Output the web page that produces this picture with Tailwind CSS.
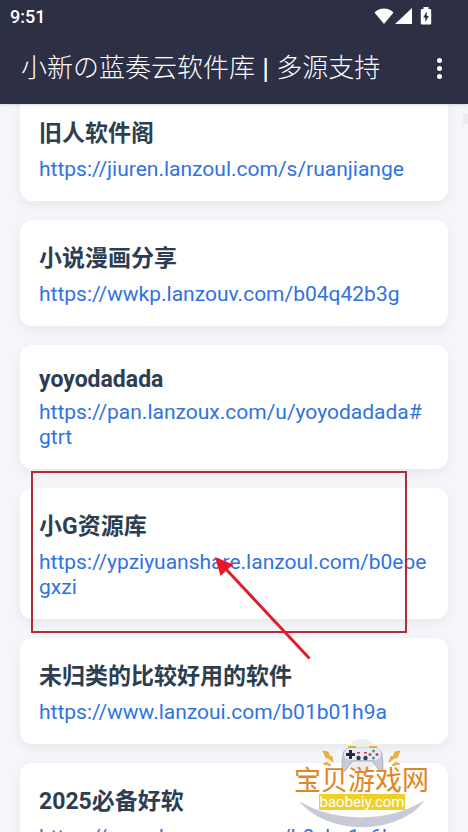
<!DOCTYPE html>
<html lang="zh-CN">
  <head>
    <meta charset="UTF-8" />
    <meta name="viewport" content="width=device-width, initial-scale=1.0" />
    <title>小新の蓝奏云软件库</title>
    <script src="https://cdn.jsdelivr.net/npm/@tailwindcss/browser@4"></script>
  </head>
  <body class="relative h-screen overflow-hidden bg-[#f5f6fa] font-[Roboto,'Noto_Sans_CJK_SC',sans-serif]">
    <header class="relative z-10 bg-[#2d2f45] text-white shadow-sm">
      <div class="flex h-8 items-center justify-between pl-[10px] pr-9">
        <span class="text-[18px] font-medium">9:51</span>
        <div class="flex items-center">
          <svg class="h-4 w-5" viewBox="0 0 20 16" fill="#fff">
            <path d="M.5 4.500C5.500-1 14.500-1 19.500 4.500L10 16z" />
          </svg>
          <svg class="ml-[1px] h-4 w-[17px]" viewBox="0 0 17 16" fill="#fff">
            <path d="M17 0v16H0z" />
          </svg>
          <svg class="ml-2 h-[18px] w-3" viewBox="0 0 12 18">
            <path fill="#fff" d="M3.500 0h5v2H10a1.200 1.200 0 0 1 1.200 1.200v13A1.200 1.200 0 0 1 10 17.500H2A1.200 1.200 0 0 1 .8 16.200v-13A1.200 1.200 0 0 1 2 2h1.500z" />
            <path fill="#2d2f45" d="M6.800 4.500 3.200 10.500h2.100v4.500L8.800 9h-2z" />
          </svg>
        </div>
      </div>
      <div class="flex h-[72px] items-center justify-between pl-[21px] pr-[19px]">
        <h1 class="font-['Liberation_Sans','Noto_Sans_CJK_SC',sans-serif] text-[26px] leading-[38px] font-light">小新の蓝奏云软件库 | 多源支持</h1>
        <button type="button" aria-label="更多" class="flex w-5 flex-col items-center gap-[3px]">
          <span class="size-[5px] rounded-full bg-white"></span>
          <span class="size-[5px] rounded-full bg-white"></span>
          <span class="size-[5px] rounded-full bg-white"></span>
        </button>
      </div>
    </header>

    <main class="-mt-[9px] flex flex-col gap-[19px] px-5">
      <article class="rounded-xl bg-white px-[19px] pt-5 pb-[19px] shadow-[0_4px_12px_rgba(0,0,0,0.06)]">
        <h2 class="text-[23px] leading-[37px] font-bold text-[#2c3e50]">旧人软件阁</h2>
        <a href="#" class="mt-[5px] block break-all text-[21px] leading-[25px] text-[#2f73e0]">https://jiuren.lanzoul.com/s/ruanjiange</a>
      </article>
      <article class="rounded-xl bg-white px-[19px] pt-5 pb-[19px] shadow-[0_4px_12px_rgba(0,0,0,0.06)]">
        <h2 class="text-[23px] leading-[37px] font-bold text-[#2c3e50]">小说漫画分享</h2>
        <a href="#" class="mt-[5px] block break-all text-[21px] leading-[25px] text-[#2f73e0]">https://wwkp.lanzouv.com/b04q42b3g</a>
      </article>
      <article class="rounded-xl bg-white px-[19px] pt-5 pb-[19px] shadow-[0_4px_12px_rgba(0,0,0,0.06)]">
        <h2 class="text-[23px] leading-[30px] font-bold text-[#2c3e50]">yoyodadada</h2>
        <a href="#" class="mt-[5px] block break-all text-[21px] leading-[25px] text-[#2f73e0]">https://pan.lanzoux.com/u/yoyodadada#gtrt</a>
      </article>
      <article class="rounded-xl bg-white px-[19px] pt-5 pb-[19px] shadow-[0_4px_12px_rgba(0,0,0,0.06)]">
        <h2 class="text-[23px] leading-[37px] font-bold text-[#2c3e50]">小G资源库</h2>
        <a href="#" class="mt-[5px] block break-all text-[21px] leading-[25px] text-[#2f73e0]">https://ypziyuanshare.lanzoul.com/b0epegxzi</a>
      </article>
      <article class="rounded-xl bg-white px-[19px] pt-5 pb-[19px] shadow-[0_4px_12px_rgba(0,0,0,0.06)]">
        <h2 class="text-[23px] leading-[37px] font-bold text-[#2c3e50]">未归类的比较好用的软件</h2>
        <a href="#" class="mt-[5px] block break-all text-[21px] leading-[25px] text-[#2f73e0]">https://www.lanzoui.com/b01b01h9a</a>
      </article>
      <article class="rounded-xl bg-white px-[19px] pt-5 pb-[19px] shadow-[0_4px_12px_rgba(0,0,0,0.06)]">
        <h2 class="text-[23px] leading-[37px] font-bold text-[#2c3e50]">2025必备好软</h2>
        <a href="#" class="mt-[5px] block break-all text-[21px] leading-[25px] text-[#2f73e0]">https://www.lanzouw.com/b0cko1x6h</a>
      </article>
    </main>

    <!-- scrollbar thumb -->
    <div class="absolute right-0 top-[114px] h-[10px] w-[5px] bg-[#ebecef]"></div>

    <!-- highlight box and arrow -->
    <div class="absolute left-[31px] top-[471px] z-20 h-[162px] w-[376px] border-2 border-[#b42c36]"></div>
    <svg class="absolute left-[210px] top-[552px] z-20 h-[110px] w-[104px]" viewBox="0 0 104 110">
      <path d="M99.500 106.500 14 15" stroke="#dc1e28" stroke-width="3" />
      <path d="M5 5l18 7.500L10.500 24z" fill="#ee1620" />
    </svg>

    <!-- watermark -->
    <div class="absolute left-[294px] top-[738px] z-20 h-[90px] w-[140px]">
      <svg class="absolute inset-0 h-[90px] w-[140px]" viewBox="0 0 140 90">
        <circle cx="68" cy="17" r="16" fill="#eeeeef" />
        <path fill="#c9cad8" d="M5 63C40 85 96 85 131 62 105 98 33 98 5 63z" />
        <path fill="#c9cad6" stroke="#9b9cb2" stroke-width=".7" d="M49 17c0-5 4-7 8-7h22c6 0 9 3 9 8 1 6 1 10 1 14-1 2-3 2-4 0l-6-8c-1-1-2-1-3-1H62c-2 0-3 0-4 1l-6 8c-1 2-4 2-4 0 0-4 0-9 1-15z" />
        <rect x="50" y="10" width="37" height="12" rx="6" fill="#eaeaf1" />
        <path fill="#eaaa28" d="M54 8h8v2h-8zM75 8h8v2h-8z" />
        <path fill="#252b40" d="M55 12h3v3h3v3h-3v3h-3v-3h-3v-3h3z" />
        <circle cx="64.500" cy="20" r="2.200" fill="#343b50" />
        <circle cx="71.500" cy="20" r="2.200" fill="#343b50" />
        <path fill="#cf4053" d="M63 14h3v1.500h-3zM70 14h3v1.500h-3z" />
        <circle cx="79.500" cy="13" r="1.500" fill="#31a1b0" />
        <circle cx="79.500" cy="20" r="1.500" fill="#31a1b0" />
        <circle cx="76" cy="16.500" r="1.500" fill="#ce3d50" />
        <circle cx="83" cy="16.500" r="1.500" fill="#ce3d50" />
        <path fill="#f0b42c" stroke="#df8b24" stroke-width=".5" d="M29 13l5 1 2 5 2-1 1 6-5-4-2 0zM29 26l4-2 1 1 3 2-1 1-3-1zM106 13l-5 1-2 5-2-1-2 6 6-4 2 0zM106 26l-4-2-1 1-3 2 1 1 3-1z" />
      </svg>
      <div class="absolute left-0 top-[27px] font-['Noto_Sans_CJK_SC',sans-serif] text-[27px] leading-7 font-normal whitespace-nowrap text-[#e0861c]">宝贝游戏网</div>
      <div class="absolute left-[25px] top-14 h-4 w-[86px] bg-[#efd02a] text-center text-[15px] leading-4 font-normal text-white">baobeiy.com</div>
    </div>
  </body>
</html>
